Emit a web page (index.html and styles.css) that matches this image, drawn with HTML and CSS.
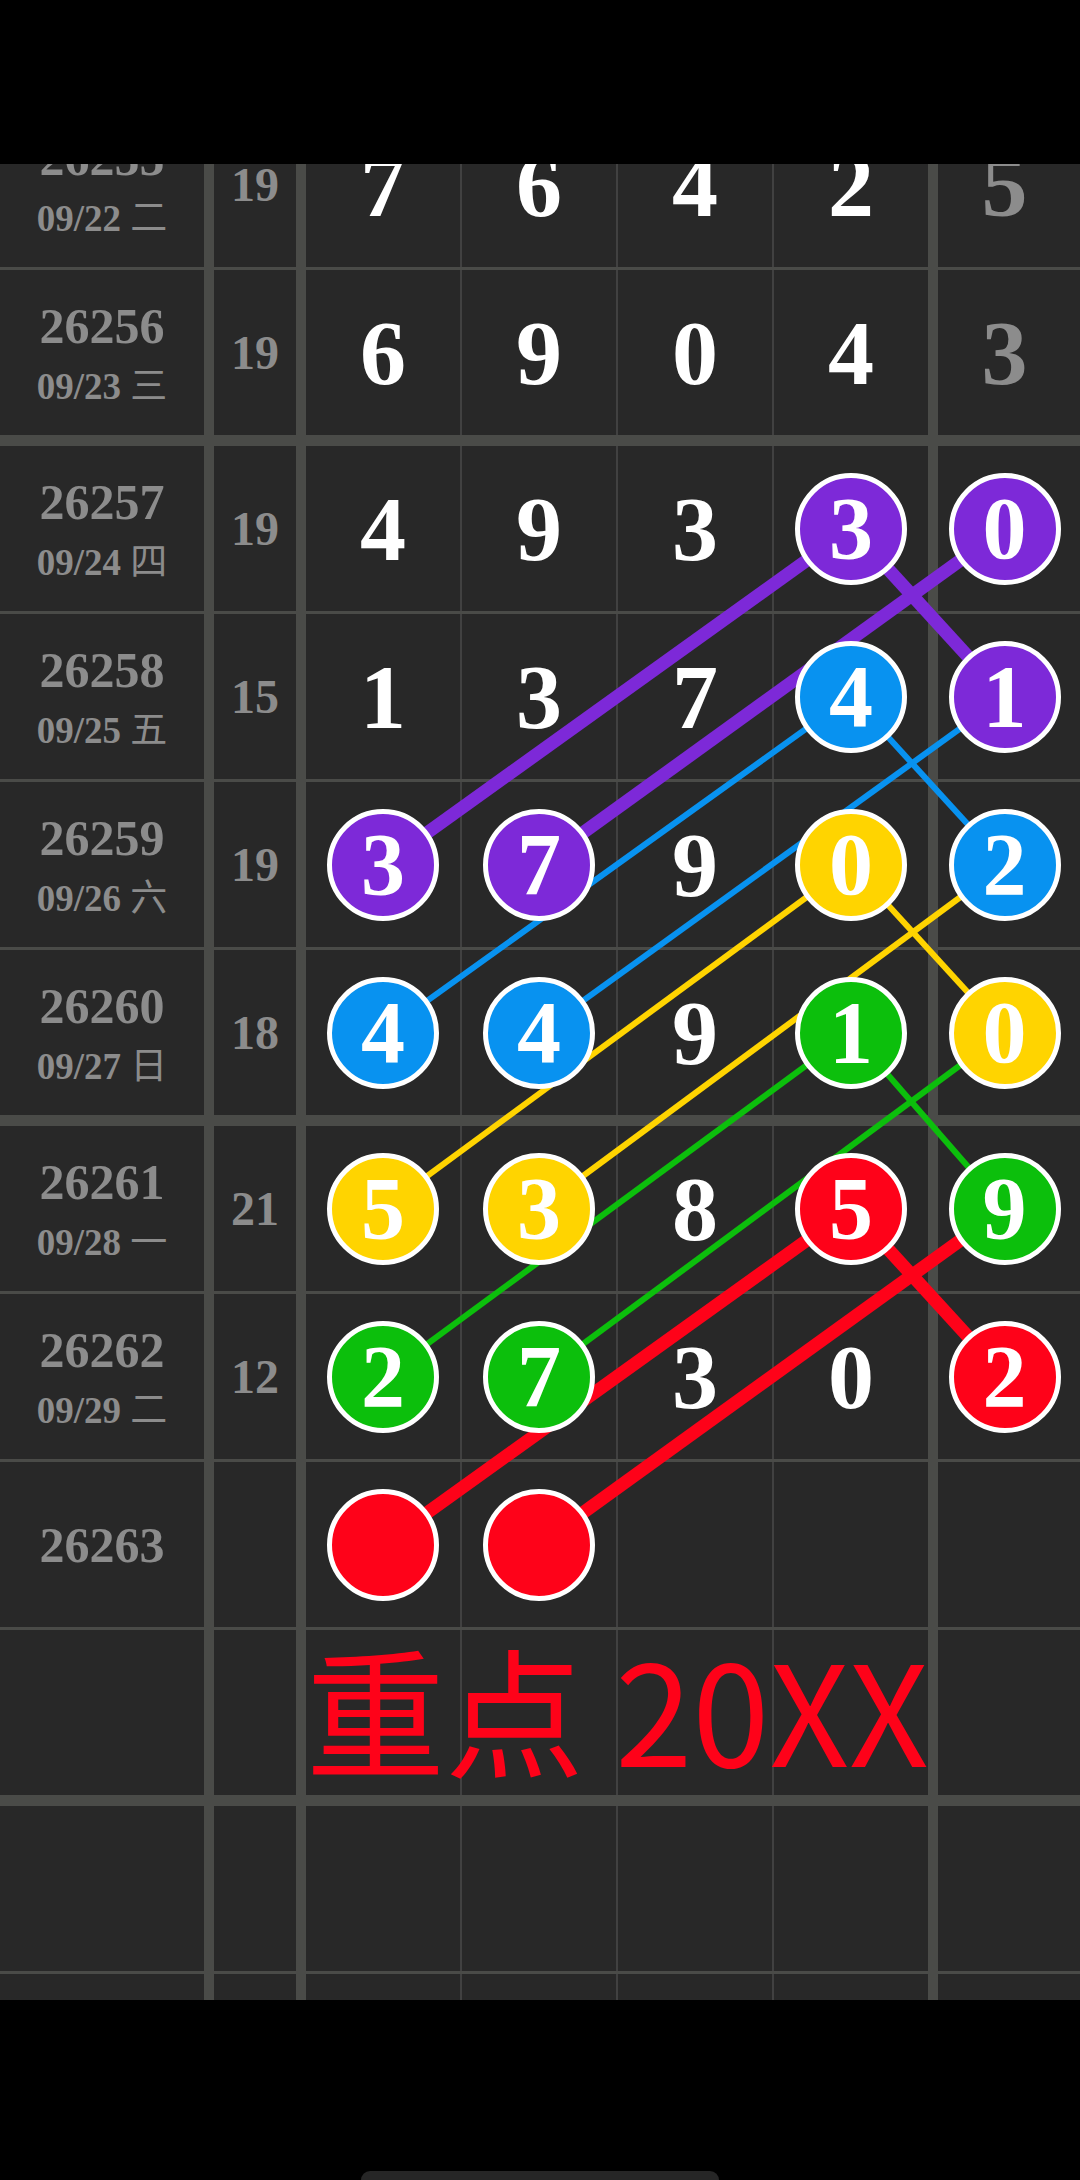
FILE: index.html
```html
<!DOCTYPE html>
<html lang="zh-Hant">
<head>
  <meta charset="UTF-8">
  <meta name="viewport" content="width=device-width, initial-scale=1.0">
  <title>Lottery Trend</title>
  <link rel="stylesheet" href="styles.css">
</head>
<body>
  <div class="status-bar"></div>

  <div class="sheet">
    <div class="board">
      <!-- links between the marked balls, drawn under the balls -->
      <svg class="links" width="1080" height="2040" viewBox="0 0 1080 2040">
        <g class="purple" stroke-width="13">
          <line x1="851" y1="426.5" x2="383" y2="762.5"/>
          <line x1="1004.5" y1="426.5" x2="539" y2="762.5"/>
          <line x1="851" y1="426.5" x2="1004.5" y2="594.5"/>
        </g>
        <g class="blue" stroke-width="6">
          <line x1="851" y1="594.5" x2="383" y2="930.5"/>
          <line x1="1004.5" y1="594.5" x2="539" y2="930.5"/>
          <line x1="851" y1="594.5" x2="1004.5" y2="762.5"/>
        </g>
        <g class="yellow" stroke-width="6">
          <line x1="851" y1="762.5" x2="383" y2="1106.5"/>
          <line x1="1004.5" y1="762.5" x2="539" y2="1106.5"/>
          <line x1="851" y1="762.5" x2="1004.5" y2="930.5"/>
        </g>
        <g class="green" stroke-width="6">
          <line x1="851" y1="930.5" x2="383" y2="1274.5"/>
          <line x1="1004.5" y1="930.5" x2="539" y2="1274.5"/>
          <line x1="851" y1="930.5" x2="1004.5" y2="1106.5"/>
        </g>
        <g class="red" stroke-width="13">
          <line x1="851" y1="1106.5" x2="383" y2="1442.5"/>
          <line x1="1004.5" y1="1106.5" x2="539" y2="1442.5"/>
          <line x1="851" y1="1106.5" x2="1004.5" y2="1274.5"/>
        </g>
      </svg>

      <div class="row">
        <div class="cell info"><span class="issue">26255</span><span class="date">09/22 <span class="wd">二</span></span></div>
        <div class="cell sum">19</div>
        <div class="cell"><span class="num">7</span></div>
        <div class="cell"><span class="num">6</span></div>
        <div class="cell"><span class="num">4</span></div>
        <div class="cell edge"><span class="num">2</span></div>
        <div class="cell extra"><span class="num muted">5</span></div>
      </div>

      <div class="row week-end">
        <div class="cell info"><span class="issue">26256</span><span class="date">09/23 <span class="wd">三</span></span></div>
        <div class="cell sum">19</div>
        <div class="cell"><span class="num">6</span></div>
        <div class="cell"><span class="num">9</span></div>
        <div class="cell"><span class="num">0</span></div>
        <div class="cell edge"><span class="num">4</span></div>
        <div class="cell extra"><span class="num muted">3</span></div>
      </div>

      <div class="row">
        <div class="cell info"><span class="issue">26257</span><span class="date">09/24 <span class="wd">四</span></span></div>
        <div class="cell sum">19</div>
        <div class="cell"><span class="num">4</span></div>
        <div class="cell"><span class="num">9</span></div>
        <div class="cell"><span class="num">3</span></div>
        <div class="cell edge"><span class="ball purple">3</span></div>
        <div class="cell extra"><span class="ball purple">0</span></div>
      </div>

      <div class="row">
        <div class="cell info"><span class="issue">26258</span><span class="date">09/25 <span class="wd">五</span></span></div>
        <div class="cell sum">15</div>
        <div class="cell"><span class="num">1</span></div>
        <div class="cell"><span class="num">3</span></div>
        <div class="cell"><span class="num">7</span></div>
        <div class="cell edge"><span class="ball blue">4</span></div>
        <div class="cell extra"><span class="ball purple">1</span></div>
      </div>

      <div class="row">
        <div class="cell info"><span class="issue">26259</span><span class="date">09/26 <span class="wd">六</span></span></div>
        <div class="cell sum">19</div>
        <div class="cell"><span class="ball purple">3</span></div>
        <div class="cell"><span class="ball purple">7</span></div>
        <div class="cell"><span class="num">9</span></div>
        <div class="cell edge"><span class="ball yellow">0</span></div>
        <div class="cell extra"><span class="ball blue">2</span></div>
      </div>

      <div class="row week-end">
        <div class="cell info"><span class="issue">26260</span><span class="date">09/27 <span class="wd">日</span></span></div>
        <div class="cell sum">18</div>
        <div class="cell"><span class="ball blue">4</span></div>
        <div class="cell"><span class="ball blue">4</span></div>
        <div class="cell"><span class="num">9</span></div>
        <div class="cell edge"><span class="ball green">1</span></div>
        <div class="cell extra"><span class="ball yellow">0</span></div>
      </div>

      <div class="row">
        <div class="cell info"><span class="issue">26261</span><span class="date">09/28 <span class="wd">一</span></span></div>
        <div class="cell sum">21</div>
        <div class="cell"><span class="ball yellow">5</span></div>
        <div class="cell"><span class="ball yellow">3</span></div>
        <div class="cell"><span class="num">8</span></div>
        <div class="cell edge"><span class="ball red">5</span></div>
        <div class="cell extra"><span class="ball green">9</span></div>
      </div>

      <div class="row">
        <div class="cell info"><span class="issue">26262</span><span class="date">09/29 <span class="wd">二</span></span></div>
        <div class="cell sum">12</div>
        <div class="cell"><span class="ball green">2</span></div>
        <div class="cell"><span class="ball green">7</span></div>
        <div class="cell"><span class="num">3</span></div>
        <div class="cell edge"><span class="num">0</span></div>
        <div class="cell extra"><span class="ball red">2</span></div>
      </div>

      <div class="row">
        <div class="cell info"><span class="issue">26263</span></div>
        <div class="cell sum"></div>
        <div class="cell"><span class="ball red"></span></div>
        <div class="cell"><span class="ball red"></span></div>
        <div class="cell"></div>
        <div class="cell edge"></div>
        <div class="cell extra"></div>
      </div>

      <div class="row week-end">
        <div class="cell info"></div>
        <div class="cell sum"></div>
        <div class="cell note-cell"><span class="note">重点 20XX</span></div>
        <div class="cell"></div>
        <div class="cell"></div>
        <div class="cell edge"></div>
        <div class="cell extra"></div>
      </div>

      <div class="row">
        <div class="cell info"></div>
        <div class="cell sum"></div>
        <div class="cell"></div>
        <div class="cell"></div>
        <div class="cell"></div>
        <div class="cell edge"></div>
        <div class="cell extra"></div>
      </div>

      <div class="row">
        <div class="cell info"></div>
        <div class="cell sum"></div>
        <div class="cell"></div>
        <div class="cell"></div>
        <div class="cell"></div>
        <div class="cell edge"></div>
        <div class="cell extra"></div>
      </div>
    </div>
  </div>

  <div class="nav-bar">
    <span class="home-bar"></span>
  </div>
</body>
</html>
```

FILE: styles.css
```css
* {
  box-sizing: border-box;
}

body {
  margin: 0;
  width: 1080px;
  height: 2180px;
  overflow: hidden;
  background: #000;
  font-family: "Liberation Serif", "Noto Sans CJK TC", serif;
}

.status-bar {
  height: 164px;
  background: #000;
}

.sheet {
  height: 1836px;
  overflow: hidden;
  background: #282828;
}

.board {
  position: relative;
  margin-top: -62px;
}

.links {
  position: absolute;
  top: 0;
  left: 0;
  z-index: 1;
}

.links .purple { stroke: #7d29d8; }
.links .blue { stroke: #0892f0; }
.links .yellow { stroke: #ffd400; }
.links .green { stroke: #0cbf0c; }
.links .red { stroke: #fe0219; }

.row {
  display: grid;
  grid-template-columns: 214px 92px 156px 156px 156px 164px 142px;
  border-bottom: 3px solid #4a4b48;
}

.row.week-end {
  border-bottom-width: 11px;
}

.cell {
  height: 165px;
  display: flex;
  align-items: center;
  justify-content: center;
  background: #282828;
  border-right: 2px solid #414141;
}

.cell.info,
.cell.sum,
.cell.edge {
  border-right: 10px solid #4a4b48;
}

.cell.info {
  flex-direction: column;
}

.cell.extra {
  border-right: none;
  padding-right: 9px;
}

.issue {
  font-size: 50px;
  font-weight: bold;
  line-height: 1;
  color: #8c8c8c;
}

.date {
  margin-top: 14px;
  font-size: 37px;
  font-weight: bold;
  line-height: 1;
  color: #8c8c8c;
}

.date .wd {
  font-family: "Noto Sans CJK TC", sans-serif;
  font-weight: normal;
  line-height: 1;
}

.cell.sum {
  font-size: 48px;
  font-weight: bold;
  color: #8c8c8c;
}

.num {
  font-size: 92px;
  font-weight: bold;
  line-height: 1;
  color: #fff;
}

.num.muted {
  color: #8c8c8c;
}

.ball {
  position: relative;
  z-index: 2;
  width: 112px;
  height: 112px;
  border-radius: 50%;
  border: 5px solid #fff;
  display: flex;
  align-items: center;
  justify-content: center;
  font-size: 88px;
  font-weight: bold;
  line-height: 1;
  color: #fff;
}

.ball.purple { background: #7d29d8; }
.ball.blue { background: #0892f0; }
.ball.yellow { background: #ffd400; }
.ball.green { background: #0cbf0c; }
.ball.red { background: #fe0219; }

.cell.note-cell {
  justify-content: flex-start;
}

.note {
  position: relative;
  z-index: 2;
  margin-bottom: 12px;
  white-space: nowrap;
  font-family: "Noto Sans CJK SC", sans-serif;
  font-size: 139px;
  line-height: 1;
  color: #fe0219;
}

.nav-bar {
  height: 180px;
  padding-top: 171px;
  display: flex;
  justify-content: center;
  background: #000;
}

.home-bar {
  width: 358px;
  height: 18px;
  border-radius: 9px;
  background: #262626;
}
```
